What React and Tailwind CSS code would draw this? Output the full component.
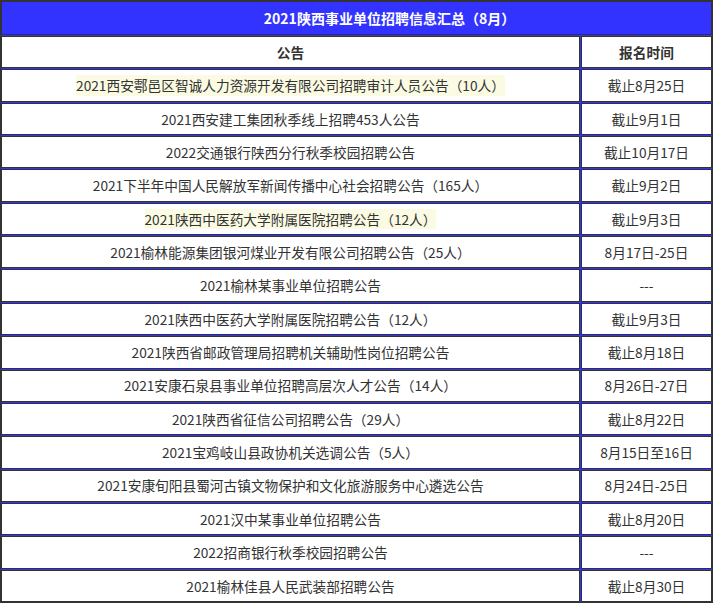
const rows = [
  { title: "2021西安鄠邑区智诚人力资源开发有限公司招聘审计人员公告（10人）", time: "截止8月25日", mark: true },
  { title: "2021西安建工集团秋季线上招聘453人公告", time: "截止9月1日" },
  { title: "2022交通银行陕西分行秋季校园招聘公告", time: "截止10月17日" },
  { title: "2021下半年中国人民解放军新闻传播中心社会招聘公告（165人）", time: "截止9月2日" },
  { title: "2021陕西中医药大学附属医院招聘公告（12人）", time: "截止9月3日", mark: true },
  { title: "2021榆林能源集团银河煤业开发有限公司招聘公告（25人）", time: "8月17日-25日" },
  { title: "2021榆林某事业单位招聘公告", time: "---" },
  { title: "2021陕西中医药大学附属医院招聘公告（12人）", time: "截止9月3日" },
  { title: "2021陕西省邮政管理局招聘机关辅助性岗位招聘公告", time: "截止8月18日" },
  { title: "2021安康石泉县事业单位招聘高层次人才公告（14人）", time: "8月26日-27日" },
  { title: "2021陕西省征信公司招聘公告（29人）", time: "截止8月22日" },
  { title: "2021宝鸡岐山县政协机关选调公告（5人）", time: "8月15日至16日" },
  { title: "2021安康旬阳县蜀河古镇文物保护和文化旅游服务中心遴选公告", time: "8月24日-25日" },
  { title: "2021汉中某事业单位招聘公告", time: "截止8月20日" },
  { title: "2022招商银行秋季校园招聘公告", time: "---" },
  { title: "2021榆林佳县人民武装部招聘公告", time: "截止8月30日" },
];

const cell = "flex items-center justify-center border border-[#333] bg-white";

const App = () => {
  return (
    <div
      className="w-[713px] h-[603px] overflow-hidden bg-white text-[13.7px] text-[#333]"
      style={{ fontFamily: '"Microsoft YaHei", "Noto Sans CJK SC", "Noto Sans", sans-serif' }}
    >
      <div className="grid h-[603px] grid-cols-[579px_1fr] grid-rows-[34px_repeat(17,1fr)] gap-px border border-[#333] bg-[#3333ff]">
        <div className="col-span-2 flex items-center justify-center border border-[#333] bg-[#3333ff] pl-[66px] text-[14px] font-bold text-white">
          2021陕西事业单位招聘信息汇总（8月）
        </div>

        <div className={cell + " font-bold"}>公告</div>
        <div className={cell + " font-bold"}>报名时间</div>

        {rows.map((r, i) => (
          <div key={i} className="contents">
            <div className={cell}>
              <span className={r.mark ? "bg-[#fbfbe4]" : ""}>{r.title}</span>
            </div>
            <div className={cell}>{r.time}</div>
          </div>
        ))}
      </div>
    </div>
  );
};

export default App;
